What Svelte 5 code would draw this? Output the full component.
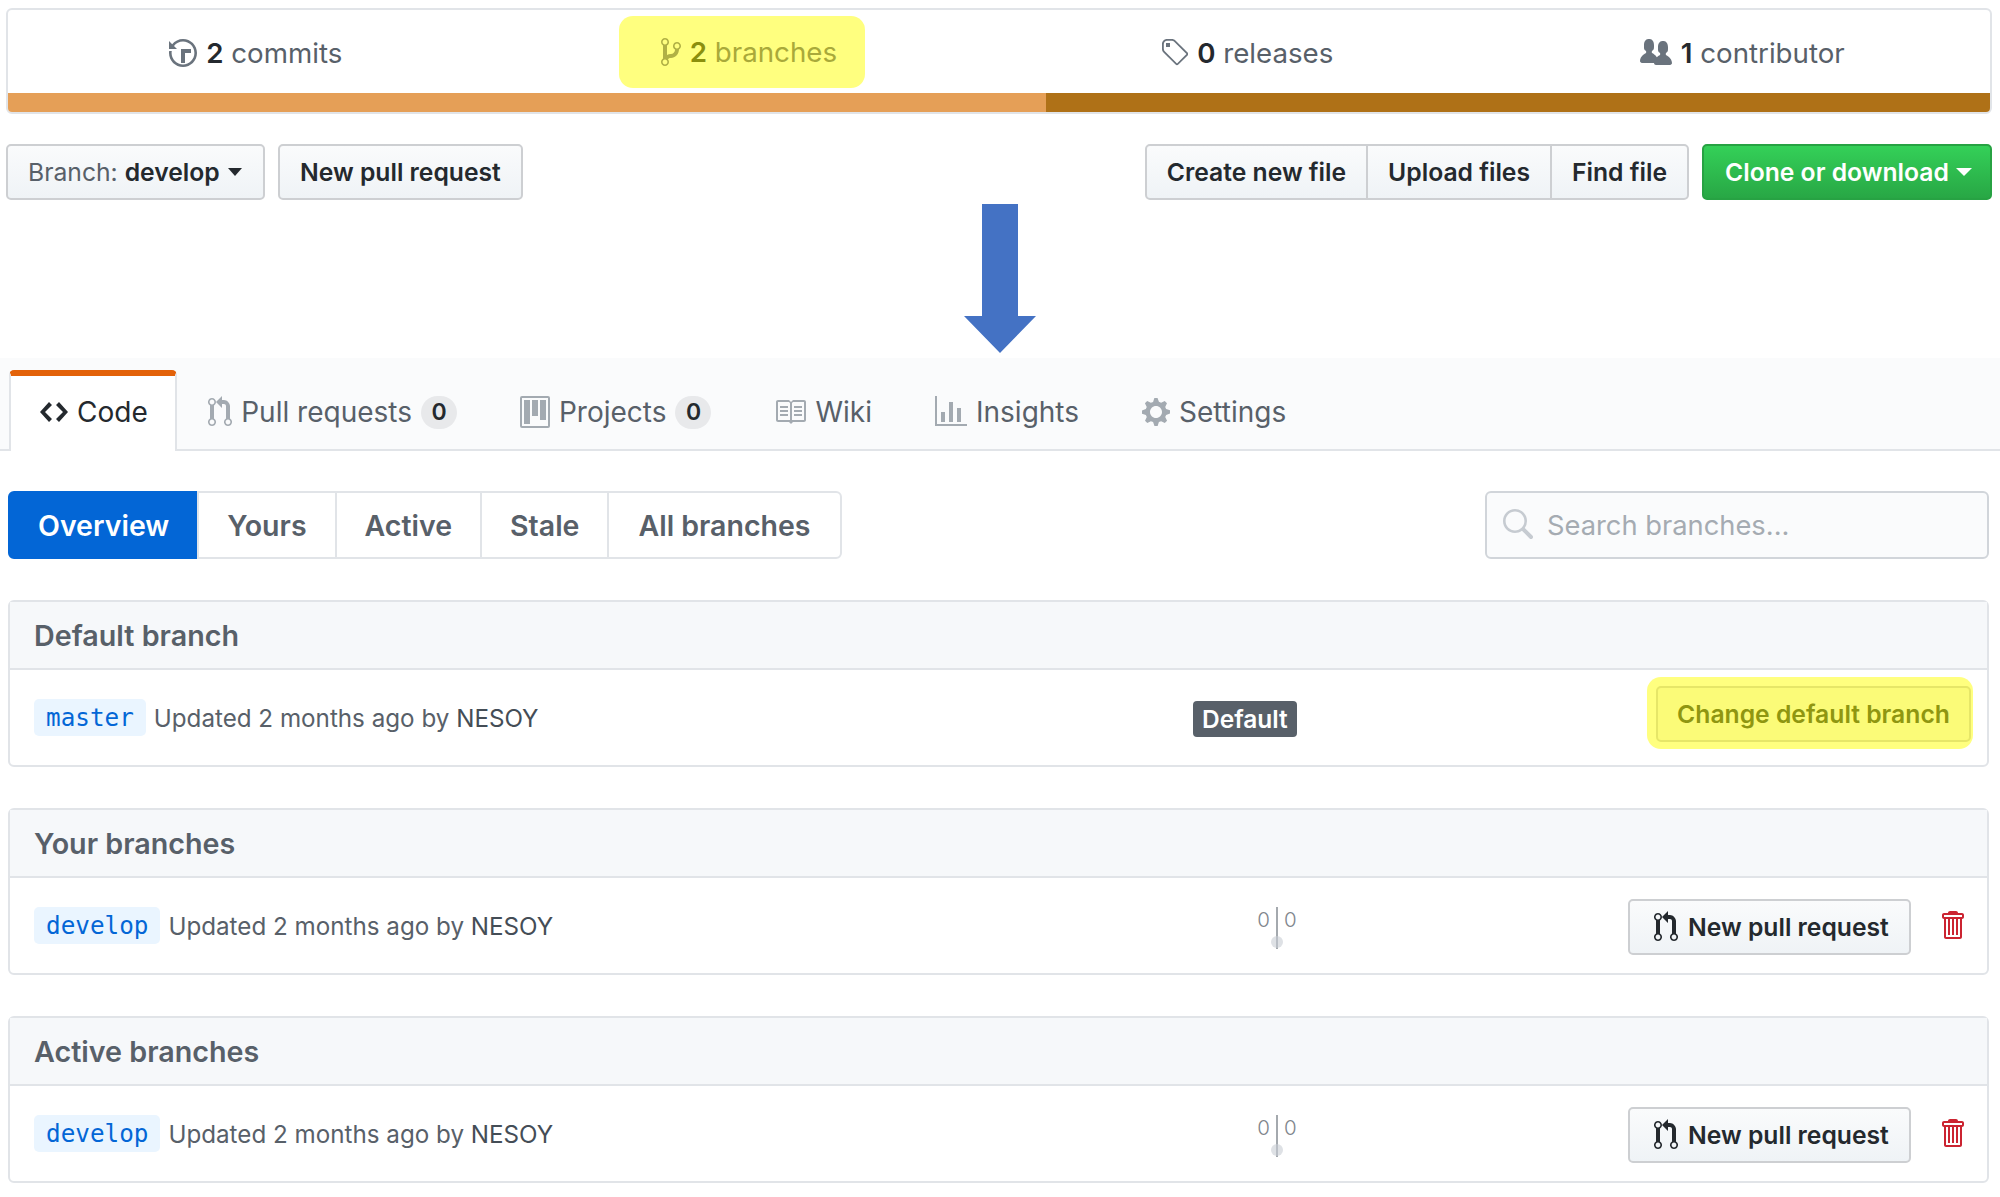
<script>
  const icons = {
    history: ["0 0 14 16", "M8 13H6V6h5v2H8v5zM7 1C4.81 1 2.87 2.02 1.59 3.59L0 2v4h4L2.5 4.5C3.55 3.17 5.17 2.3 7 2.3c3.14 0 5.7 2.56 5.7 5.7s-2.56 5.7-5.7 5.7A5.71 5.71 0 0 1 1.3 8c0-.34.03-.67.09-1H.08C.03 7.33 0 7.66 0 8c0 3.86 3.14 7 7 7s7-3.14 7-7-3.14-7-7-7z"],
    branch: ["0 0 10 16", "M10 5c0-1.11-.89-2-2-2a1.993 1.993 0 0 0-1 3.72v.3c-.02.52-.23.98-.63 1.38-.4.4-.86.61-1.38.63-.83.02-1.48.16-2 .45V4.72a1.993 1.993 0 0 0-1-3.72C.88 1 0 1.89 0 3a2 2 0 0 0 1 1.72v6.56c-.59.35-1 .99-1 1.72 0 1.11.89 2 2 2 1.11 0 2-.89 2-2 0-.53-.2-1-.53-1.36.09-.06.48-.41.59-.47.25-.11.56-.17.94-.17 1.05-.05 1.95-.45 2.75-1.25S8.95 7.77 9 6.73h-.02C9.59 6.37 10 5.73 10 5zM2 1.8c.66 0 1.2.55 1.2 1.2 0 .65-.55 1.2-1.2 1.2C1.35 4.2.8 3.65.8 3c0-.65.55-1.2 1.2-1.2zm0 12.41c-.66 0-1.2-.55-1.2-1.2 0-.65.55-1.2 1.2-1.2.65 0 1.2.55 1.2 1.2 0 .65-.55 1.2-1.2 1.2zm6-8c-.66 0-1.2-.55-1.2-1.2 0-.65.55-1.2 1.2-1.2.65 0 1.2.55 1.2 1.2 0 .65-.55 1.2-1.2 1.2z"],
    tag: ["0 0 14 16", "M7.73 1.73C7.26 1.26 6.62 1 5.96 1H3.5C2.13 1 1 2.13 1 3.5v2.47c0 .66.27 1.3.73 1.77l6.06 6.06c.39.39 1.02.39 1.41 0l4.59-4.59a.996.996 0 0 0 0-1.41L7.73 1.73zM2.38 7.09c-.31-.3-.47-.7-.47-1.13V3.5c0-.88.72-1.59 1.59-1.59h2.47c.42 0 .83.16 1.13.47l6.14 6.13-4.73 4.73-6.13-6.15zM3.01 3h2v2H3V3h.01z"],
    org: ["0 0 16 16", "M16 12.999c0 .439-.45 1-1 1H7.995c-.539 0-.994-.447-.995-.999H1c-.54 0-1-.561-1-1 0-2.634 3-4 3-4s.229-.409 0-1c-.841-.621-1.058-.59-1-3 .058-2.419 1.367-3 2.5-3s2.442.58 2.5 3c.058 2.41-.159 2.379-1 3-.229.59 0 1 0 1s1.549.711 2.42 2.088C9.196 9.369 10 8.999 10 8.999s.229-.409 0-1c-.841-.62-1.058-.59-1-3 .058-2.419 1.367-3 2.5-3s2.437.581 2.495 3c.059 2.41-.158 2.38-1 3-.229.59 0 1 0 1s3.005 1.366 3.005 4z"],
    code: ["0 0 14 16", "M9.5 3L8 4.5 11.5 8 8 11.5 9.5 13 14 8 9.5 3zm-5 0L0 8l4.5 5L6 11.5 2.5 8 6 4.5 4.5 3z"],
    pull: ["0 0 12 16", "M11 11.28V5c-.03-.78-.34-1.47-.94-2.06C9.46 2.35 8.78 2.03 8 2H7V0L4 3l3 3V4h1c.27.02.48.11.69.31.21.2.3.42.31.69v6.28A1.993 1.993 0 0 0 10 15a1.993 1.993 0 0 0 1-3.72zm-1 2.92c-.66 0-1.2-.55-1.2-1.2 0-.65.55-1.2 1.2-1.2.65 0 1.2.55 1.2 1.2 0 .65-.55 1.2-1.2 1.2zM4 3c0-1.11-.89-2-2-2a1.993 1.993 0 0 0-1 3.72v6.56A1.993 1.993 0 0 0 2 15a1.993 1.993 0 0 0 1-3.72V4.72c.59-.34 1-.98 1-1.72zm-.8 10c0 .66-.55 1.2-1.2 1.2-.65 0-1.2-.55-1.2-1.2 0-.65.55-1.2 1.2-1.2.65 0 1.2.55 1.2 1.2zM2 4.2C1.34 4.2.8 3.65.8 3c0-.65.55-1.2 1.2-1.2.65 0 1.2.55 1.2 1.2 0 .65-.55 1.2-1.2 1.2z"],
    project: ["0 0 15 16", "M10 12h3V2h-3v10zm-4-2h3V2H6v8zm-4 4h3V2H2v12zm-1 1h13V1H1v14zM14 0H1a1 1 0 0 0-1 1v14a1 1 0 0 0 1 1h13a1 1 0 0 0 1-1V1a1 1 0 0 0-1-1z"],
    book: ["0 0 16 16", "M3 5h4v1H3V5zm0 3h4V7H3v1zm0 2h4V9H3v1zm11-5h-4v1h4V5zm0 2h-4v1h4V7zm0 2h-4v1h4V9zm2-6v9c0 .55-.45 1-1 1H9.5l-1 1-1-1H2c-.55 0-1-.45-1-1V3c0-.55.45-1 1-1h5.5l1 1 1-1H15c.55 0 1 .45 1 1zm-8 .5L7.5 3H2v9h6V3.5zm7-.5H9.5l-.5.5V12h6V3z"],
    graph: ["0 0 16 16", "M16 14v1H0V0h1v14h15zM5 13H3V8h2v5zm4 0H7V3h2v10zm4 0h-2V6h2v7z"],
    gear: ["0 0 14 16", "M14 8.77v-1.6l-1.94-.64-.45-1.09.88-1.84-1.13-1.13-1.81.91-1.09-.45-.69-1.92h-1.6l-.63 1.94-1.11.45-1.84-.88-1.13 1.13.91 1.81-.45 1.09L0 7.23v1.59l1.94.64.45 1.09-.88 1.84 1.13 1.13 1.81-.91 1.09.45.69 1.92h1.59l.63-1.94 1.11-.45 1.84.88 1.13-1.13-.92-1.81.47-1.09L14 8.75v.02zM7 11c-1.66 0-3-1.34-3-3s1.34-3 3-3 3 1.34 3 3-1.34 3-3 3z"],
    search: ["0 0 16 16", "M15.7 13.3l-3.81-3.83A5.93 5.93 0 0 0 13 6c0-3.31-2.69-6-6-6S1 2.69 1 6s2.69 6 6 6c1.3 0 2.48-.41 3.47-1.11l3.83 3.81c.19.2.45.3.7.3.25 0 .52-.09.7-.3a.996.996 0 0 0 0-1.41v.01zM7 10.7c-2.59 0-4.7-2.11-4.7-4.7 0-2.59 2.11-4.7 4.7-4.7 2.59 0 4.7 2.11 4.7 4.7 0 2.59-2.11 4.7-4.7 4.7z"],
    trash: ["0 0 12 16", "M11 2H9c0-.55-.45-1-1-1H5c-.55 0-1 .45-1 1H2c-.55 0-1 .45-1 1v1c0 .55.45 1 1 1v9c0 .55.45 1 1 1h7c.55 0 1-.45 1-1V5c.55 0 1-.45 1-1V3c0-.55-.45-1-1-1zm-1 12H3V5h1v8h1V5h1v8h1V5h1v8h1V5h1v9zm1-10H2V3h9v1z"]
  };

  const stats = [
    { icon: "history", count: 2, label: "commits" },
    { icon: "branch", count: 2, label: "branches", marked: true },
    { icon: "tag", count: 0, label: "releases" },
    { icon: "org", count: 1, label: "contributor" }
  ];

  const tabs = [
    { icon: "code", label: "Code", selected: true },
    { icon: "pull", label: "Pull requests", counter: 0 },
    { icon: "project", label: "Projects", counter: 0 },
    { icon: "book", label: "Wiki" },
    { icon: "graph", label: "Insights" },
    { icon: "gear", label: "Settings" }
  ];

  const filters = ["Overview", "Yours", "Active", "Stale", "All branches"];

  const sections = [
    { title: "Default branch", branch: "master", isDefault: true },
    { title: "Your branches", branch: "develop" },
    { title: "Active branches", branch: "develop" }
  ];
</script>

{#snippet icon(name, size)}
  <svg class="icon" viewBox={icons[name][0]} height={size} fill="currentColor" aria-hidden="true">
    <path fill-rule="evenodd" d={icons[name][1]} />
  </svg>
{/snippet}

<div class="page">
  <div class="summary">
    <ul class="stats">
      {#each stats as s}
        <li class="stat">
          <span class="stat-inner" class:marked={s.marked}>
            <span class="stat-icon">{@render icon(s.icon, 32)}</span>
            <span><b>{s.count}</b> {s.label}</span>
          </span>
        </li>
      {/each}
    </ul>
    <div class="langbar"><span class="lang-a"></span><span class="lang-b"></span></div>
  </div>

  <div class="toolbar">
    <button class="btn branch-select">Branch:&nbsp;<b>develop</b><i class="caret"></i></button>
    <button class="btn">New pull request</button>
    <div class="spacer"></div>
    <div class="btn-group">
      <button class="btn">Create new file</button>
      <button class="btn">Upload files</button>
      <button class="btn">Find file</button>
    </div>
    <button class="btn primary">Clone or download<i class="caret"></i></button>
  </div>

  <div class="arrow-slot">
    <svg width="72" height="149" viewBox="0 0 72 149"><path d="M18 0h36v112h18l-36 37L0 112h18z" fill="#4472c4" /></svg>
  </div>

  <nav class="tabnav">
    {#each tabs as t}
      <a class="tab" class:selected={t.selected} href="#top">
        <span class="tab-icon">{@render icon(t.icon, 32)}</span>
        <span>{t.label}</span>
        {#if t.counter !== undefined}<span class="counter">{t.counter}</span>{/if}
      </a>
    {/each}
  </nav>

  <div class="filters">
    <div class="subnav">
      {#each filters as f, i}
        <a class="subnav-item" class:selected={i === 0} href="#top">{f}</a>
      {/each}
    </div>
    <div class="search">
      <span class="search-icon">{@render icon("search", 32)}</span>
      <span>Search branches...</span>
    </div>
  </div>

  {#each sections as sec}
    <section class="card">
      <h3 class="card-head">{sec.title}</h3>
      <div class="row">
        <div class="row-main">
          <a class="ref" href="#top">{sec.branch}</a>
          <span class="meta">Updated 2 months ago by <span class="author">NESOY</span></span>
        </div>
        {#if sec.isDefault}
          <div class="row-mid"><span class="badge">Default</span></div>
          <div class="row-end">
            <div class="mark-box"><button class="btn-change">Change default branch</button></div>
          </div>
        {:else}
          <div class="row-mid">
            <div class="diverge">
              <span>0</span><span class="rule"><i class="dot"></i></span><span>0</span>
            </div>
          </div>
          <div class="row-end">
            <button class="btn pr-btn"><span class="pr-icon">{@render icon("pull", 32)}</span>New pull request</button>
            <span class="trash">{@render icon("trash", 32)}</span>
          </div>
        {/if}
      </div>
    </section>
  {/each}
</div>

<style>
  :global(body) {
    background: #fff;
  }

  .page {
    box-sizing: border-box;
    width: 2000px;
    height: 1197px;
    overflow: hidden;
    padding-top: 8px;
    font-family: Inter, "Liberation Sans", sans-serif;
    font-size: 28px;
    color: #586069;
  }

  .icon {
    display: block;
  }

  .summary {
    margin: 0 8px 0 6px;
    border: 2px solid #e1e4e8;
    border-radius: 6px;
    overflow: hidden;
  }

  .stats {
    display: grid;
    grid-template-columns: repeat(4, 1fr);
    margin: 0;
    padding: 0;
    list-style: none;
    height: 83px;
  }

  .stat {
    display: flex;
    justify-content: center;
    align-items: center;
    padding-top: 3px;
    box-sizing: border-box;
    font-size: 27.7px;
  }

  .stat-inner {
    display: flex;
    align-items: center;
  }

  .stat-inner b {
    font-weight: 600;
    color: #24292e;
  }

  .stat-icon {
    color: #6a737d;
    margin-right: 9px;
  }

  .stat-inner.marked {
    box-sizing: border-box;
    height: 72px;
    width: 246px;
    margin: -2px 19px 0 0;
    padding: 0 0 0 42px;
    border-radius: 14px;
    background: #ffff7f;
    color: #a9a93a;
  }

  .marked b {
    color: #8b8f0e;
  }

  .marked .stat-icon {
    color: #b0b045;
  }

  .langbar {
    display: flex;
    height: 19px;
  }

  .lang-a {
    width: 1038px;
    background: #e59f57;
  }

  .lang-b {
    flex: 1;
    background: #af7117;
  }

  .toolbar {
    display: flex;
    margin: 30px 8px 0 6px;
    gap: 13px;
  }

  .spacer {
    flex: 1;
  }

  .btn {
    display: inline-flex;
    align-items: center;
    box-sizing: border-box;
    height: 56px;
    padding: 0 20px;
    border: 2px solid #cdcfd2;
    border-radius: 5px;
    background: linear-gradient(#fafbfc, #eff3f6);
    font: 600 24.7px Inter, "Liberation Sans", sans-serif;
    color: #24292e;
    white-space: nowrap;
  }

  .btn b {
    font-weight: 600;
    color: #24292e;
  }

  .branch-select {
    width: 259px;
    font-weight: 400;
    color: #586069;
  }

  .caret {
    display: inline-block;
    margin-left: 8px;
    border-style: solid;
    border-width: 8px 7px 0;
    border-color: currentColor transparent transparent;
  }

  .branch-select .caret {
    color: #24292e;
  }

  .btn-group {
    display: flex;
  }

  .btn-group .btn {
    border-radius: 0;
    margin-left: -2px;
  }

  .btn-group .btn:first-child {
    border-radius: 5px 0 0 5px;
    margin-left: 0;
  }

  .btn-group .btn:last-child {
    border-radius: 0 5px 5px 0;
  }

  .primary {
    width: 290px;
    padding-left: 21px;
    background: linear-gradient(#34d058, #28a745);
    border-color: #27a243;
    color: #fff;
  }

  .primary .caret {
    margin-left: 7px;
    border-width: 8px 8px 0;
  }

  .arrow-slot {
    display: flex;
    justify-content: center;
    box-sizing: border-box;
    height: 158px;
    padding-top: 4px;
  }

  .tabnav {
    display: flex;
    align-items: flex-end;
    box-sizing: border-box;
    height: 93px;
    padding-left: 9px;
    background: #fafbfc;
    border-bottom: 2px solid #e1e4e8;
  }

  .tab {
    display: flex;
    align-items: center;
    box-sizing: border-box;
    height: 81px;
    margin-bottom: -2px;
    padding: 0 29.5px 3px;
    border: 2px solid transparent;
    border-top-width: 6px;
    border-bottom: 0;
    border-radius: 5px 5px 0 0;
    font-size: 28px;
    color: #586069;
    text-decoration: none;
    white-space: nowrap;
  }

  .tab-icon {
    margin-right: 9px;
    color: #a3aab1;
  }

  .tab.selected {
    padding: 0 27px 3px 29px;
    background: #fff;
    border-color: #e36209 #e1e4e8 transparent;
    color: #24292e;
  }

  .tab.selected .tab-icon {
    color: #24292e;
  }

  .counter {
    display: inline-block;
    box-sizing: border-box;
    min-width: 36px;
    height: 33px;
    margin-left: 9px;
    border-radius: 18px;
    background: rgba(27, 31, 35, 0.08);
    font-size: 23px;
    font-weight: 600;
    line-height: 33px;
    text-align: center;
    color: #24292e;
  }

  .filters {
    display: flex;
    justify-content: space-between;
    margin: 40px 11px 0 8px;
  }

  .subnav {
    display: flex;
    height: 68px;
  }

  .subnav-item {
    display: flex;
    align-items: center;
    justify-content: center;
    box-sizing: border-box;
    padding: 0 28px;
    margin-left: -2px;
    border: 2px solid #e1e4e8;
    font-size: 28.5px;
    font-weight: 600;
    color: #586069;
    text-decoration: none;
  }

  .subnav-item:first-child {
    margin-left: 0;
    border-radius: 6px 0 0 6px;
  }

  .subnav-item:last-child {
    padding: 0 30px 0 29px;
    border-radius: 0 6px 6px 0;
  }

  .subnav-item.selected {
    background: #0366d6;
    border-color: #0366d6;
    color: #fff;
  }

  .search {
    display: flex;
    align-items: center;
    box-sizing: border-box;
    width: 504px;
    height: 68px;
    padding-left: 14px;
    border: 2px solid #d1d5da;
    border-radius: 6px;
    background: #fafbfc;
    font-size: 27.3px;
    color: #a5abb2;
  }

  .search-icon {
    margin-right: 14px;
    color: #c6cbd1;
  }

  .card {
    margin: 41px 11px 0 8px;
    border: 2px solid #e1e4e8;
    border-radius: 6px;
  }

  .card-head {
    box-sizing: border-box;
    height: 68px;
    margin: 0;
    padding: 0 24px;
    border-bottom: 2px solid #e1e4e8;
    background: #f6f8fa;
    font-size: 28.7px;
    font-weight: 600;
    line-height: 68px;
    color: #586069;
  }

  .row {
    display: flex;
    align-items: center;
    box-sizing: border-box;
    height: 95px;
    padding: 2px 24px 0;
    font-size: 24.2px;
  }

  .row-main {
    display: flex;
    align-items: center;
    width: 1160px;
  }

  .ref {
    margin: -2px 8px 0 0;
    padding: 4px 12px;
    border-radius: 5px;
    background: #eaf5ff;
    font-family: "DejaVu Sans Mono", "Liberation Mono", monospace;
    font-size: 24.3px;
    color: #0366d6;
    text-decoration: none;
  }

  .author {
    color: #444d56;
  }

  .row-mid {
    width: 160px;
  }

  .row-end {
    flex: 1;
    display: flex;
    align-items: center;
    justify-content: flex-end;
  }

  .badge {
    display: inline-block;
    margin-left: -1px;
    padding: 3px 9px;
    border-radius: 4px;
    background: #586069;
    font-size: 24.5px;
    font-weight: 600;
    color: #fff;
  }

  .mark-box {
    box-sizing: border-box;
    width: 326px;
    height: 72px;
    margin: -11px -10px 0 0;
    padding: 9px 2px 7px 9px;
    border-radius: 14px;
    background: #ffff7f;
  }

  .btn-change {
    width: 100%;
    height: 100%;
    border: 2px solid #e6e668;
    border-radius: 5px;
    background: #fbfb78;
    font: 600 24.7px Inter, "Liberation Sans", sans-serif;
    color: #8f9611;
  }

  .diverge {
    display: flex;
    justify-content: center;
    align-items: flex-start;
    gap: 6px;
    margin-top: 3px;
    padding-left: 6px;
    font-size: 20.5px;
    font-weight: 300;
    color: #7f868d;
    line-height: 26px;
  }

  .rule {
    position: relative;
    width: 2px;
    height: 42px;
    background: #a4a9ae;
  }

  .dot {
    position: absolute;
    left: -5px;
    bottom: 1px;
    width: 12px;
    height: 12px;
    border-radius: 50%;
    background: rgba(200, 205, 212, 0.6);
  }

  .pr-btn {
    width: 283px;
    padding-left: 24px;
  }

  .pr-icon {
    margin-right: 10px;
  }

  .trash {
    margin: -3px -1px 0 29px;
    color: #cb2431;
  }
</style>
